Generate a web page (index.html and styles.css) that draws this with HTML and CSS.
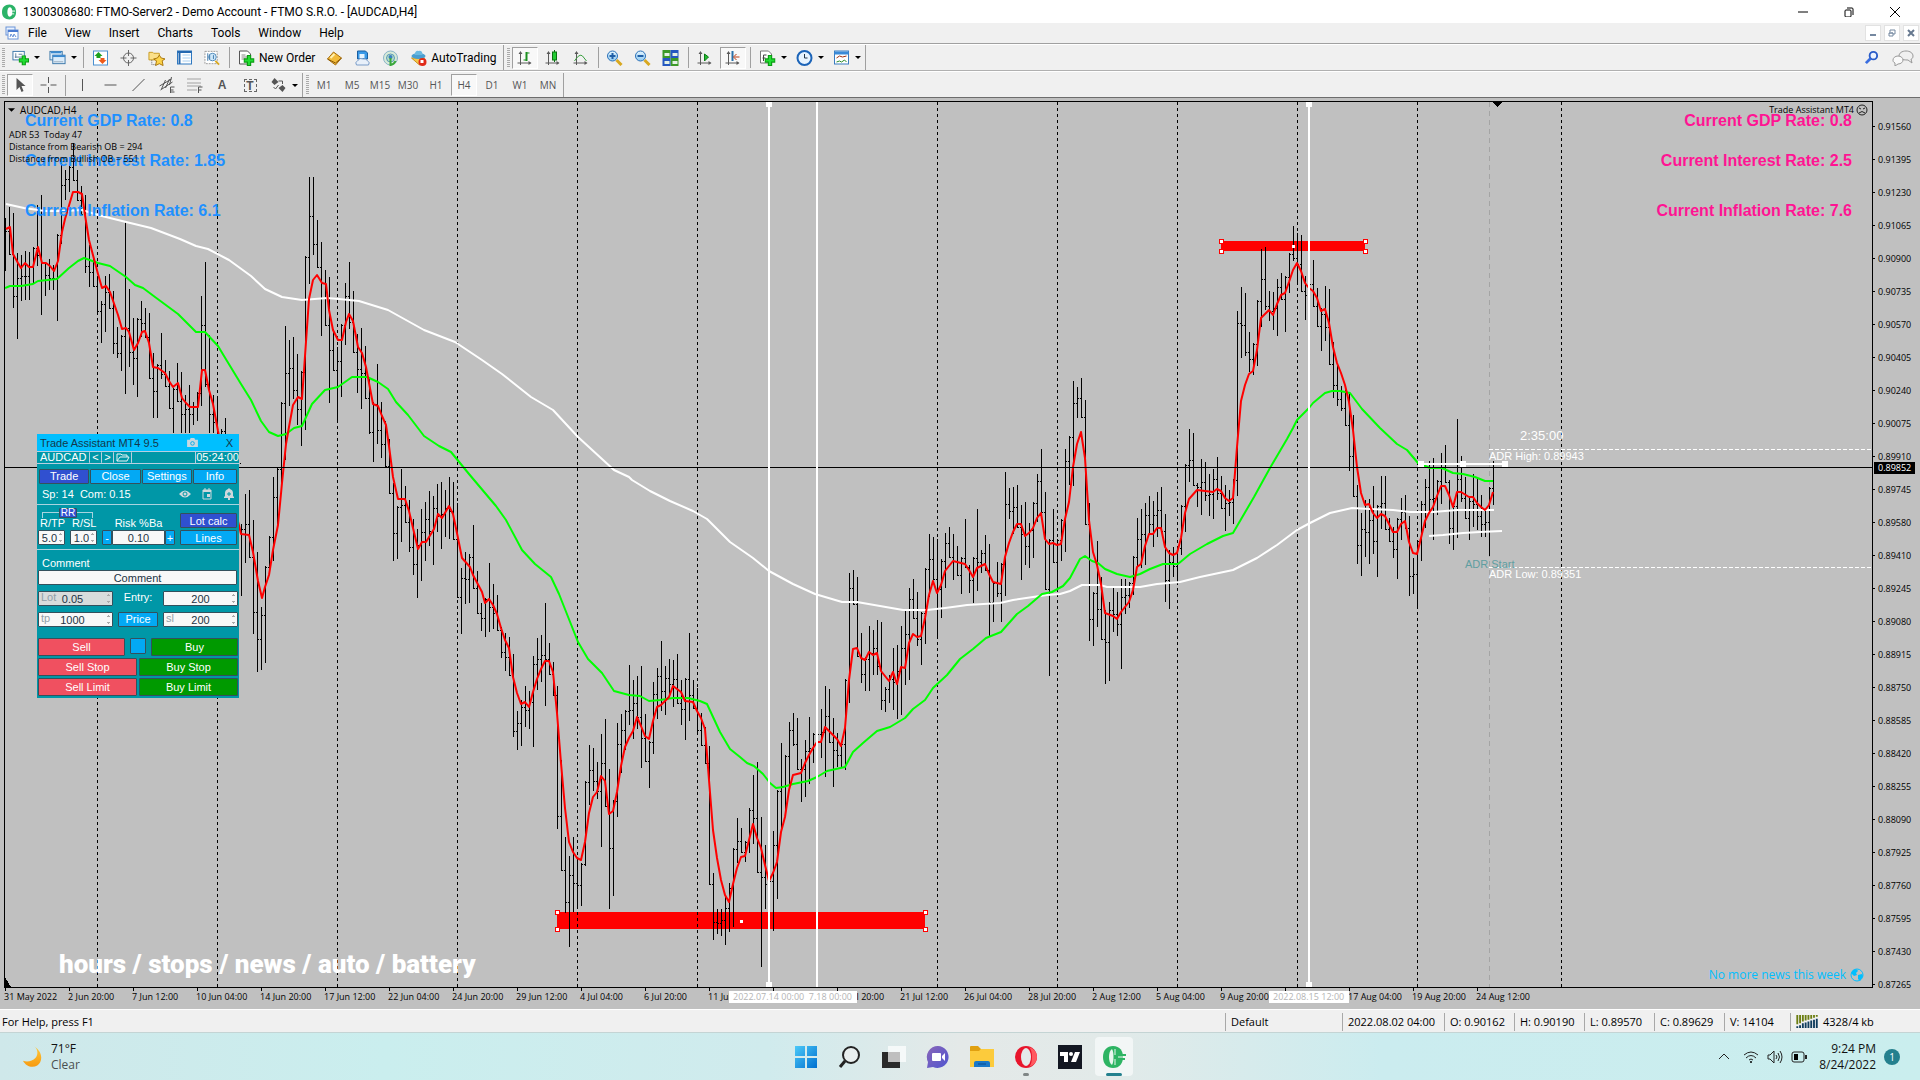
FILE: index.html
```html
<!DOCTYPE html>
<html lang="en">
<head>
<meta charset="utf-8">
<title>1300308680: FTMO-Server2 - Demo Account - FTMO S.R.O. - [AUDCAD,H4]</title>
<link rel="stylesheet" href="styles.css">
</head>
<body>
<svg class="defs" aria-hidden="true">
  <defs>
    <linearGradient id="lens" x1="0" y1="0" x2="0" y2="1"><stop offset="0" stop-color="#e6f6ff"/><stop offset="1" stop-color="#8cc8f0"/></linearGradient>
    <linearGradient id="win" x1="0" y1="0" x2="1" y2="1"><stop offset="0" stop-color="#4cc9f8"/><stop offset="1" stop-color="#0070d0"/></linearGradient>
    <linearGradient id="chat" x1="0" y1="0" x2="1" y2="1"><stop offset="0" stop-color="#8a66b8"/><stop offset="1" stop-color="#4f55d0"/></linearGradient>
    <linearGradient id="moon" x1="0" y1="0" x2="0" y2="1"><stop offset="0" stop-color="#ffc83a"/><stop offset="1" stop-color="#f79a10"/></linearGradient>
    <symbol id="plus" viewBox="0 0 10 10"><path d="M3 0h4v3h3v4H7v3H3V7H0V3h3z" fill="#0a9a12"/><path d="M4 1h2v3h3v2H6v3H4V6H1V4h3z" fill="#22dd33"/></symbol>
    <symbol id="axes" viewBox="0 0 16 16"><path d="M4 3v12M1 13h13" fill="none" stroke="#5a5a5a"/><path d="M2 4l2-3 2 3zM12 11l3 2-3 2z" fill="#5a5a5a"/></symbol>
    <symbol id="logo" viewBox="0 0 24 24"><path d="M11 1C5 1 1 5 1 12s4 11 10 11c7 0 10-5 10-11S18 1 11 1z" fill="#2db463"/><path d="M10 4c-4 2-4 14 0 16 2-3 2-13 0-16z" fill="#e9f6ee"/><path d="M13 4v6M13 14v6" stroke="#eef8f1" stroke-width="1" fill="none"/><path d="M14 10h10M14 14h9" stroke="#2db463" stroke-width="2"/><path d="M17 8v8" stroke="#2db463" stroke-width="2"/><path d="M16 12h7" stroke="#eef8f1" stroke-width="1"/></symbol>
  </defs>
</svg>

<header class="titlebar">
  <svg class="app-logo" viewBox="0 0 16 16"><path d="M8 0C3 0 0 3 0 8s3 8 8 8c4 0 7-3 7-8S12 0 8 0z" fill="#2bb367"/><path d="M8 3c-3 0-3 10 0 10 2 0 3-2 3-5S10 3 8 3z" fill="#fff"/><path d="M10 7h4M10 10h3" stroke="#fff"/></svg>
  <h1 class="title">1300308680: FTMO-Server2 - Demo Account - FTMO S.R.O. - [AUDCAD,H4]</h1>
  <div class="window-buttons">
    <button type="button" aria-label="Minimize"><svg viewBox="0 0 10 10"><path d="M0 5h10" stroke="#000"/></svg></button>
    <button type="button" aria-label="Restore"><svg viewBox="0 0 10 10"><rect x="1" y="3" width="6" height="7" rx="1" fill="none" stroke="#000"/><path d="M3 1h5q1 0 1 1v6" fill="none" stroke="#000"/></svg></button>
    <button type="button" aria-label="Close"><svg viewBox="0 0 10 10"><path d="M0 0l10 10M10 0L0 10" stroke="#000"/></svg></button>
  </div>
</header>

<nav class="menubar">
  <svg class="mdi-icon" viewBox="0 0 14 14"><rect x="1" y="1" width="9" height="8" fill="#eaf2ff" stroke="#6a94d8"/><rect x="3" y="4" width="10" height="9" fill="#fff" stroke="#6a94d8"/><path d="M3 5h10" stroke="#4a7ad0" stroke-width="2"/><path d="M5 11l1-3 2 3 1-3 2 3" stroke="#6a94d8" fill="none"/></svg>
  <button type="button">File</button><button type="button">View</button><button type="button">Insert</button><button type="button">Charts</button><button type="button">Tools</button><button type="button">Window</button><button type="button">Help</button>
  <div class="mdi-buttons">
    <button type="button" aria-label="Minimize chart"><svg viewBox="0 0 8 8"><path d="M1 6h6" stroke="#7588a0" stroke-width="2"/></svg></button>
    <button type="button" aria-label="Restore chart"><svg viewBox="0 0 8 8"><path d="M2 3V1h5v4H5M1 4h4v3H1zM1 4h4" stroke="#7588a0" fill="none"/></svg></button>
    <button type="button" aria-label="Close chart"><svg viewBox="0 0 8 8"><path d="M1 1l6 6M7 1L1 7" stroke="#66788f" stroke-width="2"/></svg></button>
  </div>
</nav>

<div class="toolbar">
  <div class="strip">
    <i class="grip"></i>
    <button type="button" class="tool split" aria-label="New chart"><svg viewBox="0 0 18 16"><rect x="1" y="1" width="12" height="9" fill="#fff" stroke="#3a76a8"/><path d="M4 3v5M3 7h8M7 4h4" stroke="#5a7a9a"/><use href="#plus" x="7" y="5" width="11" height="11"/></svg></button>
    <button type="button" class="tool split" aria-label="Profiles"><svg viewBox="0 0 18 16"><rect x="1" y="1" width="13" height="9" fill="#dcedfb" stroke="#3a76a8"/><path d="M2 2h11" stroke="#3a8ad0" stroke-width="2"/><rect x="4" y="5" width="13" height="9" fill="#dcedfb" stroke="#3a76a8"/><path d="M4 6h13" stroke="#3a8ad0" stroke-width="2"/><path d="M5 12h10" stroke="#9ab"/></svg></button>
    <i class="sep"></i>
    <button type="button" class="tool" aria-label="Market Watch"><svg viewBox="0 0 16 16"><rect x="1" y="1" width="14" height="14" fill="#fff" stroke="#4a90d0"/><path d="M6 2l4 4H8v2H4V6H2z" fill="#1ca01c"/><path d="M10 14l-4-4h2V8h4v2h2z" fill="#ee5a18"/></svg></button>
    <button type="button" class="tool" aria-label="Data Window"><svg viewBox="0 0 16 16"><circle cx="8" cy="8" r="5" fill="none" stroke="#666" stroke-width="1"/><path d="M8 0v6M8 10v6M0 8h6M10 8h6" stroke="#666"/></svg></button>
    <button type="button" class="tool" aria-label="Navigator"><svg viewBox="0 0 18 16"><path d="M1 2h4l1 1h6v7H1z" fill="#fbe08a" stroke="#c89a20"/><path d="M12 5l2 3 4 1-3 2 1 5-4-2-4 2 1-5-3-2 4-1z" fill="#fcd34a" stroke="#a87408"/><path d="M4 10v5h4" stroke="#666" fill="none" stroke-dasharray="1 1"/></svg></button>
    <button type="button" class="tool" aria-label="Terminal"><svg viewBox="0 0 16 16"><rect x="1" y="1" width="14" height="13" fill="#fff" stroke="#2f78c0"/><path d="M1 2h14M3 2v12" stroke="#2468b0" stroke-width="2"/><path d="M6 5h8M6 8h8M6 11h8" stroke="#a8cff0"/></svg></button>
    <button type="button" class="tool" aria-label="Strategy Tester"><svg viewBox="0 0 18 16"><rect x="1" y="1" width="13" height="13" fill="#fff" stroke="#999" stroke-dasharray="2 1"/><circle cx="9" cy="7" r="4" fill="#cfe8fa" stroke="#4a86b8"/><path d="M12 11l4 4" stroke="#d8a820" stroke-width="2"/><path d="M4 3v8M6 5v4M10 5v4" stroke="#3a76a8"/></svg></button>
    <i class="sep"></i>
    <button type="button" class="tool text"><svg viewBox="0 0 16 16"><path d="M1 1h8l3 3v10H1z" fill="#fff" stroke="#555"/><path d="M3 5h4M3 7h6M3 9h4" stroke="#888"/><use href="#plus" x="5" y="5" width="11" height="11"/></svg>New Order</button>
    <button type="button" class="tool" aria-label="MetaEditor"><svg viewBox="0 0 16 16"><path d="M1 9l6-7 8 6-6 7z" fill="#f2bb3a" stroke="#a86f10"/><path d="M1 9l8 4 6-5" stroke="#8a5a0a" fill="none"/><path d="M4 8l4-4" stroke="#fff0b0" stroke-width="2"/></svg></button>
    <button type="button" class="tool" aria-label="Virtual Hosting"><svg viewBox="0 0 16 16"><path d="M3 1h8l2 2v6H3z" fill="#3a9ae8" stroke="#1a5ea0"/><path d="M5 4h5v4H5z" fill="#e6f4ff"/><path d="M2 15q-2-3 1-4 2-4 6-2 3-1 4 2 3 1 1 4z" fill="#e8f0fa" stroke="#7a9cc8"/></svg></button>
    <button type="button" class="tool" aria-label="Signals"><svg viewBox="0 0 16 16"><circle cx="8" cy="8" r="7" fill="#d8ead8" stroke="#8ab4c8"/><circle cx="8" cy="8" r="4" fill="#b8ddc8" stroke="#5a9ab8"/><circle cx="8" cy="7" r="2" fill="#3a80c0"/><path d="M8 8v7q4-1 5-4" stroke="#3aa83a" stroke-width="2" fill="none"/></svg></button>
    <button type="button" class="tool text"><svg viewBox="0 0 16 16"><path d="M1 8h13l-5 7z" fill="#f6c84a" stroke="#c89420"/><ellipse cx="8" cy="6" rx="7" ry="3" fill="#4a9ed0"/><path d="M4 5q1-5 4-4 4-1 4 4z" fill="#6ab8e0"/><circle cx="12" cy="12" r="4" fill="#e02a18"/><rect x="10" y="10" width="3" height="3" fill="#fff"/></svg>AutoTrading</button>
  </div>
  <div class="strip">
    <i class="grip"></i>
    <button type="button" class="tool pressed" aria-label="Bar chart"><svg viewBox="0 0 16 16"><use href="#axes"/><path d="M10 2v9" stroke="#1c9020" stroke-width="2"/><path d="M10 3h3M7 10h3" stroke="#1c9020"/></svg></button>
    <button type="button" class="tool" aria-label="Candlesticks"><svg viewBox="0 0 16 16"><use href="#axes"/><path d="M10 0v12" stroke="#0a7010"/><rect x="8" y="2" width="4" height="8" fill="#22cc33" stroke="#0a7010"/></svg></button>
    <button type="button" class="tool" aria-label="Line chart"><svg viewBox="0 0 16 16"><use href="#axes"/><path d="M2 11q5-8 8-5l4 5" stroke="#3aa040" fill="none"/></svg></button>
    <i class="sep"></i>
    <button type="button" class="tool" aria-label="Zoom in"><svg viewBox="0 0 16 16"><path d="M10 10l5 5" stroke="#d8a820" stroke-width="3"/><circle cx="6" cy="6" r="5" fill="url(#lens)" stroke="#2a70b8"/><path d="M3 6h6M6 3v6" stroke="#2060a8" stroke-width="2"/></svg></button>
    <button type="button" class="tool" aria-label="Zoom out"><svg viewBox="0 0 16 16"><path d="M10 10l5 5" stroke="#d8a820" stroke-width="3"/><circle cx="6" cy="6" r="5" fill="url(#lens)" stroke="#2a70b8"/><path d="M3 6h6" stroke="#2060a8" stroke-width="2"/></svg></button>
    <button type="button" class="tool" aria-label="Tile windows"><svg viewBox="0 0 16 16"><path d="M0 0h8v8H0zM8 8h8v8H8z" fill="#3c9a28"/><path d="M8 0h8v8H8zM0 8h8v8H0z" fill="#2458c0"/><path d="M2 3h5v3H2zM10 3h5v3h-5zM2 11h5v3H2zM10 11h5v3h-5z" fill="#e4f2e4"/></svg></button>
    <i class="sep"></i>
    <button type="button" class="tool" aria-label="Auto scroll"><svg viewBox="0 0 16 16"><use href="#axes"/><path d="M8 4l4 3-4 4z" fill="#22bb30" stroke="#0a7a14"/></svg></button>
    <button type="button" class="tool pressed" aria-label="Chart shift"><svg viewBox="0 0 16 16"><use href="#axes"/><path d="M8 1v10" stroke="#2a70a8" stroke-width="2"/><path d="M15 7h-5M12 4l-3 3 3 3" stroke="#b83a10" fill="none"/></svg></button>
    <i class="sep"></i>
    <button type="button" class="tool split" aria-label="Indicators"><svg viewBox="0 0 16 16"><path d="M1 1h8l3 3v9H1z" fill="#fff" stroke="#777"/><path d="M4 11V5h3M3 8h3" stroke="#444" fill="none"/><use href="#plus" x="5" y="5" width="11" height="11"/></svg></button>
    <button type="button" class="tool split" aria-label="Periods"><svg viewBox="0 0 16 16"><circle cx="8" cy="8" r="7" fill="#e8f4ff" stroke="#1c64b8" stroke-width="2"/><path d="M8 4v4h3" stroke="#234" fill="none"/></svg></button>
    <button type="button" class="tool split" aria-label="Templates"><svg viewBox="0 0 16 16"><rect x="1" y="1" width="14" height="13" fill="#fff" stroke="#3a7cc0"/><path d="M1 3h14" stroke="#3a8ad8" stroke-width="3"/><path d="M3 8l3-2 3 1 4-1" stroke="#a03010" fill="none"/><path d="M3 12l3-1 2 1 3-2 2 2" stroke="#2a8a2a" fill="none"/></svg></button>
  </div>
  <div class="toolbar-end">
    <button type="button" aria-label="Search"><svg viewBox="0 0 16 16"><circle cx="10" cy="6" r="4" fill="#eef4ff" stroke="#2a5cc8" stroke-width="2"/><path d="M7 9l-5 5" stroke="#3a6ee0" stroke-width="3"/></svg></button>
    <button type="button" aria-label="Messages"><svg viewBox="0 0 22 16"><path d="M14 1c4 0 7 2 7 5 0 2-1 3-2 3l1 4-4-3c-6 0-9-1-9-4s3-5 7-5z" fill="#f0f0f0" stroke="#999"/><path d="M6 6c3 0 5 2 5 4s-2 4-5 4l-3 2v-3c-2-1-2-2-2-3 0-2 2-4 5-4z" fill="#fafafa" stroke="#999"/></svg></button>
  </div>
</div>

<div class="toolbar">
  <div class="strip">
    <i class="grip"></i>
    <button type="button" class="tool pressed" aria-label="Cursor"><svg viewBox="0 0 16 16"><path d="M4 1v12l3-3 2 5 2-1-2-5h4z" fill="#555"/></svg></button>
    <button type="button" class="tool" aria-label="Crosshair"><svg viewBox="0 0 16 16"><path d="M8 0v6M8 10v6M0 8h6M10 8h6" stroke="#555"/></svg></button>
    <i class="sep"></i>
    <button type="button" class="tool" aria-label="Vertical line"><svg viewBox="0 0 16 16"><path d="M8 2v12" stroke="#555"/></svg></button>
    <button type="button" class="tool" aria-label="Horizontal line"><svg viewBox="0 0 16 16"><path d="M2 8h12" stroke="#555"/></svg></button>
    <button type="button" class="tool" aria-label="Trendline"><svg viewBox="0 0 16 16"><path d="M2 14L14 2" stroke="#555"/></svg></button>
    <button type="button" class="tool" aria-label="Equidistant channel"><svg viewBox="0 0 16 16"><path d="M1 9L13 2M2 13L14 5M3 12L7 3M7 11l4-9M11 8l2-8" stroke="#555"/><path d="M12 10h4M12 13h3M12 15h4M12 10v6" stroke="#555"/></svg></button>
    <button type="button" class="tool" aria-label="Fibonacci"><svg viewBox="0 0 16 16"><path d="M1 2h14M1 6h14M1 9h14M1 13h9" stroke="#555" stroke-dasharray="1 1"/><path d="M12 10v6M12 10h4M12 13h3" stroke="#555"/></svg></button>
    <button type="button" class="tool letter" aria-label="Text">A</button>
    <button type="button" class="tool letter boxed" aria-label="Text label"><span>T</span></button>
    <button type="button" class="tool split" aria-label="Arrows"><svg viewBox="0 0 16 16"><path d="M4 1l4 4-4 3-3-3zM12 15l-4-4 4-3 3 3z" fill="#555"/><path d="M3 10l2 2 3-4M8 4h4v3" fill="none" stroke="#555" stroke-width="1"/></svg></button>
  </div>
  <div class="strip periods">
    <i class="grip"></i>
    <button type="button" class="tool">M1</button><button type="button" class="tool">M5</button><button type="button" class="tool">M15</button><button type="button" class="tool">M30</button><button type="button" class="tool">H1</button><button type="button" class="tool pressed">H4</button><button type="button" class="tool">D1</button><button type="button" class="tool">W1</button><button type="button" class="tool">MN</button>
  </div>
</div>

<main class="chart">
  <section class="plot" aria-label="AUDCAD H4 price chart">
    <svg id="canvas" class="canvas" aria-hidden="true"></svg>

    <p class="note symbol"><svg viewBox="0 0 8 4"><path d="M0 0h8L4 4z"/></svg>AUDCAD,H4</p>
    <p class="note info">ADR 53&nbsp; Today 47<br>Distance from Bearish OB = 294<br>Distance from Bullish OB = 551</p>
    <p class="note expert">Trade Assistant MT4 <svg viewBox="0 0 12 12"><circle cx="6" cy="6" r="5" fill="none" stroke="#222"/><path d="M3 4l2 1M9 4L7 5M3 9q3-3 6 0" fill="none" stroke="#222"/></svg></p>
    <div class="rates base"><p>Current GDP Rate: 0.8</p><p>Current Interest Rate: 1.85</p><p>Current Inflation Rate: 6.1</p></div>
    <div class="rates quote"><p>Current GDP Rate: 0.8</p><p>Current Interest Rate: 2.5</p><p>Current Inflation Rate: 7.6</p></div>
    <p class="tag countdown">2:35:00</p>
    <p class="tag adr-high">ADR High: 0.89943</p>
    <p class="tag adr-low">ADR Low: 0.89351</p>
    <p class="tag adr-start">ADR Start</p>
    <p class="checklist">hours / stops / news / auto / battery</p>
    <p class="news">No more news this week <svg viewBox="0 0 14 14"><circle cx="7" cy="7" r="6" fill="none" stroke="#00bfff"/><path d="M3 2q4-2 5 1l-2 2 1 2-3 1-3-3zM8 7l4-1 1 2-3 5-2-2z" fill="#00bfff"/></svg></p>

    <form class="panel" onsubmit="return false">
      <div class="panel-head"><h2>Trade Assistant MT4 9.5</h2>
        <button type="button" aria-label="Screenshot"><svg viewBox="0 0 12 10"><path d="M0 2h3l1-2h4l1 2h3v8H0z" fill="#c8d8e0"/><circle cx="6" cy="6" r="2" fill="none" stroke="#00a8e8"/></svg></button>
        <button type="button" aria-label="Close panel">X</button></div>
      <div class="panel-symbol">
        <label class="hidden" for="symbol">Symbol</label>
        <select id="symbol"><option>AUDCAD</option></select>
        <button type="button">&lt;</button><button type="button">&gt;</button>
        <button type="button" class="folder" aria-label="Open"><svg viewBox="0 0 14 9"><path d="M1 8V1h4l1 1h5v2M1 8l3-4h9l-2 4z" fill="none" stroke="#e8f4f6"/></svg></button>
        <span class="blank"></span><time>05:24:00</time>
      </div>
      <div class="tabs"><button type="button" class="on">Trade</button><button type="button">Close</button><button type="button">Settings</button><button type="button">Info</button></div>
      <div class="spread"><span>Sp: 14&nbsp; Com: 0.15</span>
        <button type="button" aria-label="Show"><svg viewBox="0 0 12 12"><path d="M0 6q6-7 12 0-6 7-12 0z" fill="#cfd8dc"/><circle cx="6" cy="6" r="2" fill="none" stroke="#0097a7"/></svg></button>
        <button type="button" aria-label="Calendar"><svg viewBox="0 0 12 12"><path d="M2 2h8v9H2zM2 3h8M4 0v2M8 0v2" fill="none" stroke="#cfd8dc" stroke-width="1"/><path d="M2 2h8v2H2zM6 6h3v3H6z" fill="#cfd8dc"/></svg></button>
        <button type="button" aria-label="Alert"><svg viewBox="0 0 12 12"><path d="M6 0l1 1q3 1 3 4v3l1 1v1H1V9l1-1V5q0-3 3-4zM5 10h2v2H5z" fill="#cfd8dc"/><path d="M6 4v4M4 6h4" stroke="#0097a7"/></svg></button>
      </div>
      <div class="risk">
        <div class="ratio">
          <button type="button" class="rr">RR</button>
          <div class="col"><label for="rtp">R/TP</label><div class="field"><input id="rtp" value="5.0"><i class="spin"></i></div></div>
          <div class="col"><label for="rsl">R/SL</label><div class="field"><input id="rsl" value="1.0"><i class="spin"></i></div></div>
        </div>
        <div class="col percent"><label for="risk">Risk %Ba</label><div class="stepper"><button type="button">-</button><div class="field"><input id="risk" value="0.10"></div><button type="button">+</button></div></div>
        <div class="col calc"><button type="button" class="on">Lot calc</button><button type="button">Lines</button></div>
      </div>
      <label class="comment" for="comment">Comment</label>
      <div class="field wide"><input id="comment" value="Comment"></div>
      <div class="orders">
        <div class="field dim"><label for="lot">Lot</label><input id="lot" value="0.05"><i class="spin"></i></div>
        <label class="mid" for="entry">Entry:</label>
        <div class="field"><input id="entry" value="200"><i class="spin"></i></div>
        <div class="field"><label for="tp">tp</label><input id="tp" value="1000"><i class="spin"></i></div>
        <button type="button" class="mid blue">Price</button>
        <div class="field"><label for="sl">sl</label><input id="sl" value="200"><i class="spin"></i></div>
      </div>
      <div class="deal market"><button type="button" class="sell">Sell</button><button type="button" class="square" aria-label="Toggle"></button><button type="button" class="buy">Buy</button></div>
      <div class="deal"><button type="button" class="sell">Sell Stop</button><button type="button" class="buy">Buy Stop</button></div>
      <div class="deal"><button type="button" class="sell">Sell Limit</button><button type="button" class="buy">Buy Limit</button></div>
    </form>
  </section>
  <div class="price-axis"><ol id="prices"></ol><span class="bid">0.89852</span></div>
  <div class="time-axis"><ol id="times"></ol><span class="stamp july">2022.07.14 00:00&nbsp; 7.18 00:00</span><span class="stamp august">2022.08.15 12:00</span></div>
</main>

<footer class="status">
  <span class="help">For Help, press F1</span>
  <span class="cell profile">Default</span><span class="cell date">2022.08.02 04:00</span><span class="cell">O: 0.90162</span><span class="cell">H: 0.90190</span><span class="cell">L: 0.89570</span><span class="cell">C: 0.89629</span><span class="cell volume">V: 14104</span>
  <span class="cell traffic"><svg viewBox="0 0 24 14"><path d="M1 0v10M4 0v9M7 0v7M10 0v6M13 0v5M16 0v4M19 0v3M22 0v2" stroke="#6b7d10" stroke-width="2"/><path d="M1 12v2M4 11v3M7 9v5M10 8v6M13 7v7M16 6v8M19 5v9M22 4v10" stroke="#0f3c5c" stroke-width="2"/></svg>4328/4 kb</span>
</footer>

<footer class="taskbar">
  <button type="button" class="weather"><svg viewBox="0 0 20 22"><path d="M12 0c4 3 4 9 1 12S5 17 0 15c3 6 10 8 15 5 6-4 6-14-3-20z" fill="url(#moon)"/></svg><span><b>71°F</b><br>Clear</span></button>
  <div class="apps">
    <button type="button" aria-label="Start"><svg viewBox="0 0 24 24"><path d="M1 1h10v10H1zM13 1h10v10H13zM1 13h10v10H1zM13 13h10v10H13z" fill="url(#win)"/></svg></button>
    <button type="button" aria-label="Search"><svg viewBox="0 0 24 24"><circle cx="13" cy="10" r="8" fill="#e8eeee" stroke="#222" stroke-width="2"/><path d="M7 16l-5 6" stroke="#222" stroke-width="3"/></svg></button>
    <button type="button" aria-label="Task view"><svg viewBox="0 0 24 24"><rect x="0" y="7" width="18" height="16" fill="#2a2a2a"/><rect x="6" y="1" width="18" height="16" fill="#fff" opacity=".7"/></svg></button>
    <button type="button" aria-label="Chat"><svg viewBox="0 0 24 24"><path d="M12 1a11 11 0 1 1-5 21l-6 1 1-6A11 11 0 0 1 12 1z" fill="url(#chat)"/><rect x="6" y="8" width="9" height="8" rx="1" fill="#fff"/><path d="M16 11l3-3v8l-3-3z" fill="#fff"/></svg></button>
    <button type="button" aria-label="File Explorer"><svg viewBox="0 0 24 24"><path d="M0 2q0-1 1-1h7l3 3h12v18H0z" fill="#e0a010"/><path d="M0 6h9l2-2h13v18H0z" fill="#fccb3c"/><path d="M4 22v-4q0-2 2-2h12q2 0 2 2v4z" fill="#1a78c8"/><path d="M8 19h8" stroke="#0a4a90"/></svg></button>
    <button type="button" class="open" aria-label="Opera"><svg viewBox="0 0 24 24"><ellipse cx="12" cy="12" rx="11" ry="11" fill="#e8152c"/><path d="M15 2q8 3 8 10t-8 10q3-3 3-10T15 2z" fill="#ff5a60"/><ellipse cx="12" cy="12" rx="5" ry="9" fill="#e4eaea"/></svg></button>
    <button type="button" aria-label="TradingView"><svg viewBox="0 0 24 24"><path d="M0 0h24v24H0z" fill="#131722"/><path d="M2 7h8v10H6v-6H2zM17 7h5l-4 10h-5z" fill="#fff"/><circle cx="13" cy="9" r="2" fill="#fff"/></svg></button>
    <button type="button" class="active" aria-label="MetaTrader"><svg viewBox="0 0 24 24"><use href="#logo"/></svg></button>
  </div>
  <div class="tray">
    <button type="button" aria-label="Hidden icons"><svg viewBox="0 0 16 16"><path d="M3 10l5-5 5 5" fill="none" stroke="#222"/></svg></button>
    <button type="button" aria-label="Network"><svg viewBox="0 0 16 16"><path d="M1 6q7-6 14 0M3 9q5-5 10 0M6 11q2-2 4 0" fill="none" stroke="#222"/><circle cx="8" cy="13" r="1"/></svg></button>
    <button type="button" aria-label="Volume"><svg viewBox="0 0 16 16"><path d="M1 6h2l4-4v12L3 10H1zM9 6q2 2 0 4M11 4q3 4 0 8M13 2q4 6 0 12" fill="none" stroke="#222"/></svg></button>
    <button type="button" aria-label="Battery"><svg viewBox="0 0 16 16"><rect x="1" y="3" width="12" height="10" rx="2" fill="none" stroke="#222" stroke-width="1"/><rect x="3" y="5" width="4" height="6"/><path d="M15 6v4" stroke="#222" stroke-width="2"/></svg></button>
    <time>9:24 PM<br>8/24/2022</time>
    <span class="badge">1</span>
  </div>
</footer>
<script src="chart.js"></script>
</body>
</html>
```

FILE: styles.css
```css
* { box-sizing: border-box; }
body {
  margin: 0; min-height: 100vh; display: flex; flex-direction: column;
  font: 12px/16px "Segoe UI", "Open Sans", sans-serif; color: #000; background: #f0f0f0;
}
p, h1, h2, ol { margin: 0; padding: 0; }
h1, h2 { font-weight: normal; }
ol { list-style: none; }
button { font: inherit; color: inherit; background: none; border: 0; padding: 0; margin: 0; }
svg { display: block; flex: none; }
.defs { position: absolute; width: 0; height: 0; }
.hidden { position: absolute; width: 1px; height: 1px; overflow: hidden; clip-path: inset(50%); }

.titlebar, .menubar, .toolbar { font-family: "Segoe UI", Roboto, sans-serif; }
.titlebar { display: flex; align-items: center; height: 23px; background: #fff; padding-left: 2px; }
.app-logo { width: 15px; height: 16px; margin-right: 6px; }
.title { font-size: 12px; flex: 1; white-space: nowrap; }
.window-buttons { display: flex; padding-right: 2px; }
.window-buttons button { width: 46px; height: 20px; display: grid; place-items: center; }
.window-buttons svg { width: 10px; height: 10px; }

.menubar { display: flex; align-items: center; height: 21px; padding: 0 1px 0 5px; border-bottom: 1px solid #a0a0a0; }
.mdi-icon { width: 14px; height: 14px; }
.menubar > button { padding: 0 9px; }
.mdi-buttons { display: flex; gap: 3px; margin-left: auto; }
.mdi-buttons button { width: 16px; height: 16px; background: #fff; border: 1px solid #e2e2e2; display: grid; place-items: center; }
.mdi-buttons svg { width: 8px; height: 8px; }

.toolbar { display: flex; height: 27px; border-top: 1px solid #fff; border-bottom: 1px solid #b0b0b0; }
.toolbar + .toolbar { height: 26px; padding-top: 1px; border-bottom: 0; }
.strip { display: flex; align-items: center; border-right: 1px solid #a0a0a0; padding-right: 1px; margin-right: 1px; }
.grip { width: 3px; height: 20px; margin: 0 1px 0 2px; background: repeating-linear-gradient(#aaa 0 1px, #f0f0f0 1px 2px); }
.sep { width: 1px; height: 21px; margin: 0 2px 0 3px; background: #a0a0a0; }
.tool { position: relative; width: 28px; height: 22px; display: flex; align-items: center; justify-content: center; }
.tool svg { width: 17px; height: 16px; }
.tool.pressed { border: 1px solid #a0a0a0; border-right-color: #fff; border-bottom-color: #fff; background: #f8f8f8; margin: 0 1px; width: 26px; }
.split { width: 37px; justify-content: flex-start; gap: 5px; padding-left: 6px; }
.split::after { content: ""; border: 3px solid transparent; border-top-color: #000; border-bottom: 0; }
.text { width: auto; padding: 0 5px 0 6px; gap: 4px; white-space: nowrap; }
.letter { font: bold 12px/16px "Liberation Sans", sans-serif; color: #555; }
.boxed span { width: 13px; height: 13px; line-height: 12px; border: 1px dashed #666; }
.periods { font: 10px/16px Tahoma, "Open Sans", sans-serif; color: #555; }
.toolbar-end { display: flex; align-items: center; gap: 13px; margin-left: auto; padding-right: 6px; }
.toolbar-end svg { width: 15px; height: 15px; }
.toolbar-end button + button svg { width: 22px; height: 16px; }

.chart {
  flex: 1; display: grid; grid-template: minmax(700px, 1fr) 21px / minmax(0, 1fr) 46px;
  background: #c0c0c0; border-top: 1px solid #6d6d6d; border-bottom: 1px solid #fff;
  padding: 3px 1px 0 4px; font-size: 9px; line-height: 12px;
}
.plot { position: relative; border: 1px solid #000; overflow: hidden; }
.canvas { position: absolute; inset: 0; width: 100%; height: 100%; }
.note { position: absolute; white-space: nowrap; }
.symbol { left: 3px; top: 2px; display: flex; align-items: center; gap: 5px; font-size: 10px; }
.symbol svg { width: 7px; height: 4px; }
.info { left: 4px; top: 27px; z-index: 1; }
.expert { right: 4px; top: 2px; display: flex; align-items: center; gap: 2px; }
.expert svg { width: 12px; height: 12px; }
.rates { position: absolute; top: 9px; font: bold 16px/20px "Liberation Sans", sans-serif; white-space: nowrap; }
.rates p + p { margin-top: 20px; }
.rates p + p + p { margin-top: 30px; }
.base { left: 20px; color: #1e90ff; }
.quote { right: 20px; color: #ff1493; text-align: right; }
.tag { position: absolute; font: 11px/12px "Liberation Sans", sans-serif; color: #fff; white-space: nowrap; }
.countdown { left: 1515px; top: 328px; font-size: 13px; }
.adr-high { left: 1484px; top: 348px; }
.adr-low { left: 1484px; top: 466px; }
.adr-start { left: 1460px; top: 456px; color: #5f9ea0; }
.checklist { position: absolute; left: 54px; bottom: 5px; font: 900 26px/36px Impact, Roboto, sans-serif; color: #fff; white-space: nowrap; }
.news { position: absolute; right: 8px; bottom: 4px; display: flex; align-items: center; gap: 4px; font-size: 12px; line-height: 16px; color: #00bfff; }
.news svg { width: 14px; height: 14px; }

.price-axis { grid-area: 1 / 2 / 3 / 3; position: relative; height: 0; }
.price-axis ol { padding-top: 9px; }
.price-axis li { position: relative; height: 33px; line-height: 33px; padding-left: 5px; }
.price-axis li::before { content: ""; position: absolute; left: 0; top: 16px; width: 2px; height: 1px; background: #000; }
.bid { position: absolute; left: 1px; top: 361px; width: 41px; height: 12px; padding-left: 4px; background: #000; color: #fff; }
.time-axis { position: relative; min-width: 0; }
.time-axis ol { display: flex; overflow: hidden; }
.time-axis li { flex: none; width: 64px; min-height: 15px; white-space: nowrap; padding-top: 3px; position: relative; }
.time-axis li::before { content: ""; position: absolute; left: 1px; top: 0; width: 1px; height: 3px; background: #000; }
.stamp { position: absolute; top: 3px; height: 12px; padding: 0 4px; background: #fff; color: #b4b4b4; white-space: nowrap; overflow: hidden; }
.july { left: 725px; width: 128px; }
.august { left: 1265px; width: 80px; }

.panel {
  position: absolute; left: 32px; top: 332px; width: 202px; padding-bottom: 2px;
  background: #0097a7; z-index: 2;
  font: 11px/14px "Liberation Sans", sans-serif; color: #fff;
}
.panel button, .panel .field { border-radius: 1px; }
.panel-head { display: flex; align-items: center; height: 17px; padding: 0 6px 0 3px; background: #00bfff; color: #14384a; }
.panel-head h2 { font-size: 11px; width: 147px; white-space: nowrap; }
.panel-head svg { width: 11px; height: 9px; }
.panel-head button:last-child { margin-left: auto; }
.panel-symbol { display: flex; height: 13px; border: solid #b8cfe0; border-width: 1px 0; line-height: 11px; }
.panel-symbol select { appearance: none; width: 52px; height: 14px; margin-top: -2px; padding: 0 0 0 3px; border: 0; background: none; font: 11px/14px "Liberation Sans", sans-serif; color: inherit; }
.panel-symbol > button { width: 12px; border-left: 1px solid #b8cfe0; }
.panel-symbol > .folder { width: 19px; border-right: 1px solid #b8cfe0; padding-left: 2px; }
.folder svg { width: 14px; height: 9px; }
.blank { flex: 1; border-right: 1px solid #b8cfe0; }
.tabs { display: flex; gap: 1px; padding: 5px 2px 0; }
.tabs button, .calc button, .blue, .square, .stepper button { background: #03a9f4; border: 1px solid #34505c; }
.tabs button { flex: 1; height: 15px; line-height: 13px; }
.tabs button:last-child { flex: 0 0 44px; }
.panel .on { background: #3050d0; }
.spread { display: flex; align-items: center; gap: 10px; height: 21px; padding: 0 4px 0 5px; margin-bottom: 1px; border-bottom: 1px solid #a8d4e0; }
.spread span { flex: 1; }
.spread svg { width: 12px; height: 12px; }
.risk { display: flex; gap: 5px; align-items: flex-end; height: 44px; padding: 0 2px 4px 1px; border-bottom: 1px solid #a8d4e0; }
.ratio { position: relative; display: flex; gap: 5px; }
.ratio::before { content: ""; position: absolute; left: 4px; right: 4px; top: -4px; height: 5px; border: 1px solid #a8d4e0; border-bottom: 0; }
.rr { position: absolute; left: 21px; top: -8px; width: 18px; height: 10px; font-size: 10px; line-height: 8px; background: #3050d0; border: 1px solid #34505c; }
.panel .rr { background: #3050d0; }
.ratio .col { width: 27px; white-space: nowrap; }
.ratio label { display: block; padding-left: 2px; }
.percent { width: 73px; text-align: center; }
.percent label { display: block; }
.stepper { display: flex; height: 15px; line-height: 12px; }
.stepper button { width: 10px; }
.stepper .field { flex: 1; }
.calc { flex: 1; display: flex; flex-direction: column; gap: 2px; }
.calc button { height: 15px; line-height: 12px; }
.field { position: relative; display: flex; align-items: center; height: 15px; background: #f8f8f8; border: 1px solid #34505c; color: #223344; }
.field input { width: 100%; min-width: 0; height: 13px; padding: 0; border: 0; background: none; font: inherit; color: inherit; text-align: center; }
.ratio input { padding-right: 4px; }
.field label { position: absolute; left: 2px; top: -2px; padding: 0; color: #90a0a8; }
.spin { position: absolute; right: 1px; top: 2px; width: 5px; height: 9px; background: linear-gradient(#aaa, #aaa) 2px 0 / 1px 1px no-repeat, linear-gradient(#aaa, #aaa) 1px 1px / 3px 1px no-repeat, linear-gradient(#aaa, #aaa) 1px 7px / 3px 1px no-repeat, linear-gradient(#aaa, #aaa) 2px 8px / 1px 1px no-repeat; }
.comment { display: block; padding: 6px 5px 0; height: 20px; }
.wide { margin: 0 2px 0 1px; }
.orders { display: grid; grid-template-columns: 75px 40px 75px; gap: 6px 5px; padding: 6px 1px 0; }
.mid { text-align: center; height: 15px; line-height: 13px; }
.dim { background: #d8dcdc; }
.orders .dim input, .orders #tp { padding-right: 6px; }
.deal { display: flex; gap: 2px; padding: 2px 1px 0; }
.deal button { flex: 1; height: 18px; line-height: 15px; border: 1px solid #34505c; }
.market { padding-top: 11px; gap: 5px; }
.deal .square { flex: 0 0 16px; height: 16px; }
.sell { background: #f05060; }
.buy { background: #009a00; }

.status { display: flex; align-items: center; height: 22px; padding-top: 1px; font-size: 11px; white-space: nowrap; }
.help { flex: 1; padding-left: 2px; }
.cell { width: 70px; height: 18px; line-height: 18px; padding-left: 5px; border-left: 1px solid #a8a8a8; }
.profile { width: 117px; }
.date { width: 102px; }
.volume { width: 66px; }
.traffic { width: 130px; display: flex; align-items: center; gap: 4px; }
.traffic svg { width: 23px; height: 13px; }

.taskbar {
  display: grid; grid-template-columns: 1fr auto 1fr; align-items: center; height: 48px; border-top: 1px solid #c4d4d4;
  background: linear-gradient(90deg, #cfe8ea, #caeeee 20%, #d0ebed 40%, #e4e9e8 50%, #e2eae9 58%, #cbecef 72%, #caeeee);
}
.weather { display: flex; align-items: center; gap: 9px; padding-left: 23px; text-align: left; color: #4a4f50; }
.weather b { font-weight: normal; color: #111; }
.weather svg { width: 19px; height: 22px; }
.apps { display: flex; gap: 6px; }
.apps button { position: relative; width: 38px; height: 39px; display: grid; place-items: center; border-radius: 4px; }
.apps svg { width: 24px; height: 24px; }
.active { background: #f2f6f6; }
.open::after, .active::after { content: ""; position: absolute; bottom: 0; left: 16px; width: 6px; height: 3px; border-radius: 2px; background: #808686; }
.active::after { left: 11px; width: 16px; background: #24808e; }
.tray { display: flex; align-items: center; justify-content: flex-end; gap: 8px; padding-right: 20px; }
.tray svg { width: 16px; height: 16px; }
.tray button:first-child { margin-right: 3px; }
.tray time { text-align: right; margin-left: 4px; color: #111; }
.badge { width: 16px; height: 16px; border-radius: 8px; background: #24808e; color: #fff; font-size: 10px; text-align: center; }
```

FILE: chart.js
```js
// Each block holds consecutive H4 bars as high/low pairs, with the block's own origin and scale.
const blocks = [
  { first: 0, y: 100, scale: 2.613, bars: [308,446,280,405,295,543,400,625,405,525,395,522,397,522,385,480,275,435,248,562,425,513,415,497,430,497,350,578,165,375,182,262,172,240,112,212,182,265,225,300,248,452,380,488,410,488,460,553,525,635,460,606,455,545,500,665,592,675,615,707,318,767,495,697,570,745,570,775,525,620,543,622,557,730,660,832,690,832,610,730,680,750,707,808,752,870,688,790,710,870,770,870,745,870,790,850,762,840,513,800,422,750,615,870,770,870,780,900,860,900,830,900,900,950,900,950,900,950,1107,1297,1030,1210,1018,1198,1098,1395,1180,1495,1325,1490,1218,1470,1140,1240,985,1205,962,1110,790,1030,590,940,627,800,618,780,665,850,708,903,408,862,200,480,202,405,313,440,370,617,445,590,462,792,598,708,645,838,585,775,478,640,422,598,500,660,612,765,595,808,643,780,730,872,790,945,690,900,790,935,840,960,885,1030,1000,1205,1060,1200,965,1155,1008,1105,1045,1180,1095,1240,1120,1300,1070,1258,1050,1205,1022,1165,1035,1215,1003,1130,997,1172,1020,1142,985,1148,997,1150,1053,1300,1222,1395,1182,1318,1187,1315,1110,1278,1230,1342] },
  { first: 119, y: 480, scale: 3, bars: [370,452,355,470,250,455,312,447,345,453,440,533,460,572,470,587,522,770,692,809,660,797,618,740,632,747,528,801,474,630,465,605,370,678,488,584,546,648,618,1047,840,1172,1070,1300,1128,1400,1070,1295,1130,1283,1150,1277,903,1158,796,975,803,933,845,958,762,1100,717,980,868,1287,960,1247,730,1010,702,880,690,810,555,735,600,778,588,747,558,864,702,846,782,923,606,822,565,717,484,693,558,706,537,650,540,680,522,672,600,735,594,779,459,723,600,687,625,765,700,797,740,852,798,1215,1178,1380,1287,1361,1287,1367,1245,1395,1210,1355,1104,1340,1014,1150,1045,1118,1083,1145,984,1118,885,1091,847,1178,1010,1461,1095,1287,1100,1320,1052,1353,930,1257,789,1055,825,1010,726,930,700,798,714,870,837,965,780,950,711,912,760,850,720,800,687,833,618,890,627,790,714,920,760,860,790,862,597,869,279,668,270,375,291,530,460,608,530,632,437,632,450,585,420,584,427,690,620,695,585,668,505,690,495,716,438,705,393,615,325,600,297,416,336,497,396,555,264,492,162,350,171,300,177,470,237,413,159,323,141,234,163,299,199,288] },
  { first: 239, y: 350, scale: 3, bars: [620,731,507,655,645,728,620,759,477,722,600,670,555,662,582,858,695,815,636,740,640,815,366,738,414,507,411,553,405,535,465,690,456,645,519,654,456,624,372,515,297,490,426,720,567,978,477,638,567,725,507,633,297,606,258,404,93,407,111,204,84,204,150,525,459,873,726,887,573,830,680,869,780,1001,757,993,714,846,726,858,686,957,686,792,695,775,618,735,504,650,477,655,459,645,438,550,453,590,426,560,411,545,492,756,600,777,590,680,590,705,465,615,342,545,237,395,249,408,400,470,327,495,336,453,372,497,357,507,321,450,378,477,405,543,420,498,387,521] },
  { first: 308, y: 200, scale: 3, bars: [333,887,261,474,279,467,396,516,429,525,300,497,147,380,142,330,273,363,276,390,237,408,219,300,228,396,159,280,78,183,99,250,105,276,228,360,240,330,180,321,264,381,325,453,258,423,267,494,425,594,490,617,558,633,570,678,580,813,645,890,854,1092,939,1128,900,1072,897,1092,858,1062,915,1131,828,987,828,990,954,1026,980,1074,954,1137,894,1020,885,987,948,1188,1074,1182,1020,1222,903,1083,837,985,783,935,774,1020,840,945,759,912,735,850,840,1032,915,1050,657,1014,768,905,831,956,895,1020,822,980,834,990,885,1010,930,1010,862,1068,783,915] }
];

// Moving averages: x,y pairs per block, block = [x origin, y origin, x scale, y scale, points].
const A = [0, 100, 2.45, 2.613], B = [480, 480, 3, 3], C = [900, 350, 3, 3], D = [1180, 200, 3, 3];
const averages = [
  ['#fff', [A, [14,271,60,283,110,290,160,291,200,287,240,300,300,315,370,334,440,363,480,382,510,390,560,418,615,460,650,495,690,514,740,522,800,517,830,520,880,526,950,548,1040,600,1115,632,1180,680,1230,717,1300,777,1355,810,1415,880,1505,967,1540,986]],
    [B, [455,0,510,33,570,62,640,92,680,118,750,187,820,235,868,272,940,312,1005,341,1085,366,1130,366,1200,377,1270,390,1340,390,1395,384,1440,378]],
    [C, [200,766,300,760,340,750,400,742,440,736,480,731,510,722,545,706,600,706,620,711,720,711,770,703,840,696,900,680,1000,661,1070,623,1130,586,1180,549]],
    [D, [352,990,390,968,450,938,515,923,570,928,640,930,690,937,760,935,830,931,941,930]]],
  ['#fff', [D, [748,1008,790,1006,850,1000,900,996,965,993]]],
  ['#0f0', [A, [12,491,24,486,52,486,80,480,92,472,140,468,170,438,190,420,205,412,239,425,270,435,308,463,330,483,350,490,380,515,435,560,480,605,503,607,533,643,550,668,590,742,615,783,640,840,660,868,682,879,700,872,720,857,740,851,765,795,797,757,828,751,863,724,900,725,925,738,950,755,970,790,1000,822,1040,878,1075,903,1105,920,1150,978,1215,1060,1240,1098,1280,1175,1310,1213,1350,1247,1370,1290,1415,1417,1440,1460,1475,1497,1505,1543,1540,1555,1567,1557]],
    [B, [508,662,540,661,580,654,625,655,660,662,680,672,720,755,750,807,780,832,800,848,822,857,850,883,870,910,888,924,910,922,940,913,985,903,1010,890,1040,873,1096,860,1120,815,1150,788,1190,753,1230,740,1276,715,1300,688,1335,660,1360,623,1400,585,1440,538]],
    [C, [220,898,258,865,304,845,350,793,385,768,425,731,455,727,490,708,510,685,540,628,556,618,575,632,595,638,616,658,650,672,690,681,720,673,750,657,790,643,835,641,870,612,920,583,970,558,1000,548,1040,478,1063,440,1110,353,1160,268,1180,235]],
    [D, [352,660,365,645,388,625,400,608,435,580,455,572,480,573,510,580,545,628,600,683,650,733,680,750,715,790,750,803,785,805,820,818,850,821,885,832,915,842,940,843]]],
  ['red', [A, [14,337,24,332,33,403,43,425,52,438,62,425,72,437,82,437,92,385,102,427,112,427,122,433,132,446,142,420,151,345,160,312,180,240,190,240,200,246,209,300,219,365,239,455,249,492,259,486,269,503,288,563,298,598,308,596,317,605,328,652,338,635,347,607,356,603,366,635,376,698,386,700,405,713,415,735,425,750,435,740,445,778,455,793,466,802,484,802,494,706,503,706,513,758,523,795,533,865,560,1000,590,1135,611,1137,621,1180,631,1258,641,1300,650,1273,660,1240,670,1175,680,1110,690,1002,700,900,709,855,719,797,729,776,739,781,748,670,758,520,768,470,776,458,788,478,798,480,807,548,817,600,827,627,837,627,847,580,856,560,866,577,876,645,886,660,896,698,915,795,925,800,935,825,945,850,954,905,964,985,974,1042,993,1042,1003,1075,1013,1118,1023,1172,1033,1155,1043,1155,1063,1120,1072,1083,1082,1093,1101,1062,1111,1083,1121,1145,1131,1197,1151,1220,1160,1240,1180,1285]],
    [B, [16,370,28,357,40,375,52,403,64,443,76,480,88,503,100,590,112,638,124,672,136,666,148,680,160,635,172,598,184,568,196,542,208,543,220,575,232,700,244,850,256,985,268,1085,280,1117,292,1135,304,1139,316,1085,328,998,340,950,352,935,364,887,376,903,388,1002,400,992,412,935,424,858,436,800,448,775,460,752,472,710,484,738,496,768,508,776,520,722,532,680,544,675,568,650,580,618,604,637,616,662,640,666,652,692,664,715,676,748,688,900,700,1050,712,1135,724,1200,736,1245,748,1267,760,1212,772,1165,784,1132,796,1127,808,1080,820,1032,832,1075,844,1103,856,1155,868,1203,880,1180,892,1145,904,1055,916,1010,928,930,940,885,964,878,976,850,988,825,1000,805,1012,787,1024,785,1036,740,1048,752,1072,778,1084,797,1096,745,1108,600,1120,507,1132,504,1144,535,1156,541,1168,515,1180,524,1192,520,1204,574,1228,602,1240,577,1252,612,1264,560,1276,564,1288,490,1300,462,1312,470,1324,467,1336,415,1348,345,1360,304,1372,338,1384,315,1396,273,1420,243]],
    [C, [160,632,196,642,208,660,220,680,232,655,256,642,268,672,280,695,304,703,316,620,328,580,340,545,352,522,364,522,376,558,388,550,400,535,412,503,424,488,436,567,448,582,460,578,472,584,484,582,496,508,508,455,520,350,532,283,544,245,556,325,568,510,580,605,592,645,604,702,616,788,640,797,652,807,664,787,688,757,700,720,712,650,724,642,736,587,748,553,760,552,772,534,784,535,796,592,808,610,820,615,832,610,844,563,856,490,868,447,892,420,940,425,952,416,964,422,976,444,988,453,1000,443,1012,290]],
    [D, [184,603,196,555,208,522,220,512,232,450,244,355,268,330,280,345,292,312,304,285,316,280,328,245,340,210,352,188,364,212,376,250,388,265,400,272,412,295,424,332,436,327,448,370,460,440,472,490,484,520,496,555,508,605,520,690,532,800,544,880,556,915,568,912,580,940,592,955,604,942,616,948,640,996,652,996,664,972,676,963,688,1025,700,1060,712,1062,724,1015,736,963,748,940,760,922,772,888,784,858,796,858,808,885,820,920,832,877,844,877,868,890,880,890,892,910,904,922,916,930,928,915,940,877]]]
];

const out = [];
const rect = (x, y, w, h, fill) => out.push(`<rect x="${x}" y="${y}" width="${w}" height="${h}" fill="${fill}"/>`);

// Supply and demand zones.
rect(557, 912, 368, 17, 'red');
rect(1221, 241, 144, 10, 'red');

// Period separators.
[97, 217, 337, 457, 577, 697, 817, 937, 1057, 1177, 1297, 1417, 1561].forEach(x =>
  out.push(`<path d="M${x} 102v2000" transform="translate(.5)" stroke="#000" stroke-dasharray="3 3"/>`));
out.push('<path d="M1489 102v2000" transform="translate(.5)" stroke="#a4a4a4" stroke-dasharray="5 4"/>');

// Bars with open and close ticks.
const bars = [];
blocks.forEach(b => {
  for (let i = 0; i < b.bars.length; i += 2)
    bars.push([5 + 4 * (b.first + i / 2), Math.round(b.y + b.bars[i] / b.scale), Math.round(b.y + b.bars[i + 1] / b.scale)]);
});
let d = '', open = null;
bars.forEach(([x, hi, lo], i) => {
  d += `M${x} ${hi}h1V${lo}h-1z`;
  if (open !== null) d += `M${x - 1} ${open}h1v1h-1z`;
  const next = bars[i + 1];
  if (next) {
    const mid = Math.round((next[1] + next[2]) / 2);
    open = Math.min(lo - 1, Math.max(hi + 1, mid));
    d += `M${x + 1} ${open}h1v1h-1z`;
  }
});
out.push(`<path d="${d}" fill="#000"/>`);

averages.forEach(([color, ...parts]) => {
  const pts = [];
  parts.forEach(([[ox, oy, sx, sy], p]) => {
    for (let i = 0; i < p.length; i += 2) pts.push(`${Math.round(ox + p[i] / sx)},${Math.round(oy + p[i + 1] / sy)}`);
  });
  out.push(`<polyline points="${pts.join(' ')}" fill="none" stroke="${color}" stroke-width="2" stroke-linejoin="round" shape-rendering="auto"/>`);
});

// Bid line, ADR levels, resistance line and vertical markers.
out.push('<path d="M5 467h4000" transform="translate(0 .5)" stroke="#000"/>');
out.push('<path d="M1489 449h4000M1489 567h4000" transform="translate(0 .5)" stroke="#fff" stroke-dasharray="4 2"/>');
rect(1420, 463, 85, 2, '#fff');
[1418, 1460, 1502].forEach(x => rect(x, 461, 6, 6, '#fff'));
[768, 816, 1308].forEach(x => rect(x, 102, 2, 2000, '#fff'));
[766, 1306].forEach(x => { rect(x, 102, 6, 5, '#fff'); rect(x, 982, 6, 5, '#fff'); });
[[557, 912], [925, 912], [557, 929], [925, 929], [1221, 241], [1365, 241], [1221, 251], [1365, 251]].forEach(([x, y]) => {
  rect(x - 2, y - 2, 5, 5, 'red');
  rect(x - 1, y - 1, 3, 3, '#fff');
});
rect(740, 920, 3, 3, '#fff');
rect(1292, 245, 3, 3, '#fff');
out.push('<path d="M1492 102h10l-5 5zM5 977v10h6z" fill="#000"/>');

document.getElementById('canvas').innerHTML =
  `<g transform="translate(-5 -102)" shape-rendering="crispEdges">${out.join('')}</g>`;

// The scale steps by 16.5 pips, with one 17-pip step below 0.89580.
const prices = [];
for (let i = 0; i < 27; i++) {
  const value = 91560 - 165 * i - (i > 12 ? 5 : 0);
  prices.push(`<li>${(value / 100000).toFixed(5)}</li>`);
}
document.getElementById('prices').innerHTML = prices.join('');
// Blank entries lie under the date stamps.
document.getElementById('times').innerHTML = ['31 May 2022', '2 Jun 20:00', '7 Jun 12:00', '10 Jun 04:00', '14 Jun 20:00', '17 Jun 12:00', '22 Jun 04:00', '24 Jun 20:00', '29 Jun 12:00', '4 Jul 04:00', '6 Jul 20:00', '11 Jul 12:00', '', '18 Jul 20:00', '21 Jul 12:00', '26 Jul 04:00', '28 Jul 20:00', '2 Aug 12:00', '5 Aug 04:00', '9 Aug 20:00', '', '17 Aug 04:00', '19 Aug 20:00', '24 Aug 12:00'].map(t => `<li>${t}</li>`).join('');
```
